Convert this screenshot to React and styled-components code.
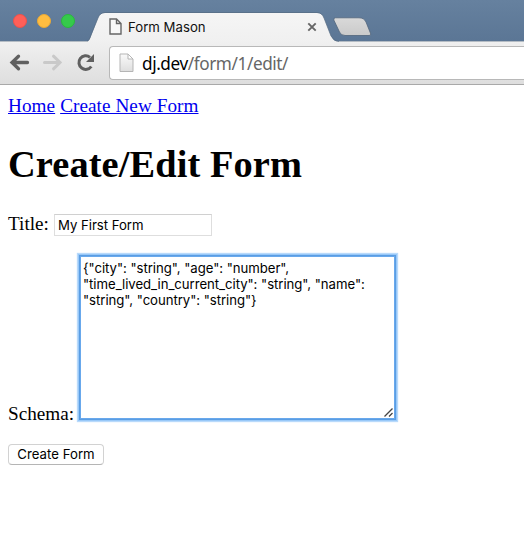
import React from "react";
import styled, { createGlobalStyle } from "styled-components";

const GlobalStyle = createGlobalStyle`
  *, *::before, *::after { box-sizing: border-box; }
  html, body { margin: 0; padding: 0; background: #fff; overflow: hidden; }
`;

const Window = styled.div`
  width: 524px;
  height: 544px;
  overflow: hidden;
  background: #fff;
`;

const TabStrip = styled.header`
  display: flex;
  height: 42px;
  background: linear-gradient(#66819f, #5b7695);
  border-bottom: 1px solid #b4bcc4;
`;

const TrafficLights = styled.div`
  display: flex;
  gap: 10px;
  padding: 14px 0 0 13px;
  width: 87px;
`;

const Light = styled.span`
  width: 14px;
  height: 14px;
  border-radius: 50%;
  background: ${(p) => p.$color};
  border: 1px solid ${(p) => p.$edge};
`;

const Tab = styled.div`
  position: relative;
  display: flex;
  width: 252px;
  height: 42px;
  padding: 0 22px 0 22px;
  flex: none;
`;

const TabShape = styled.svg`
  position: absolute;
  left: 0;
  top: 0;
`;

const TabIcon = styled.svg`
  position: relative;
  flex: none;
  margin-top: 18px;
`;

const TabTitle = styled.span`
  position: relative;
  flex: 1;
  margin: 19px 0 0 6px;
  font: 13.2px/17px Inter, "Liberation Sans", sans-serif;
  color: #111;
  white-space: nowrap;
`;

const CloseIcon = styled.svg`
  position: relative;
  margin-top: 22px;
`;

const NewTab = styled.svg`
  flex: none;
  margin: 17px 0 0 -6px;
`;

const Toolbar = styled.nav`
  display: flex;
  height: 43px;
  background: linear-gradient(#f0f0f0, #dedede);
  border-bottom: 1px solid #a9a9a9;
`;

const NavIcons = styled.div`
  display: flex;
  width: 109px;
  padding: 10px 0 0 9px;
  gap: 12px;
`;

const AddressBar = styled.div`
  display: flex;
  flex: 1;
  height: 34px;
  margin-top: 4px;
  padding-left: 9px;
  background: #fff;
  border: 1px solid #b8b8b8;
  border-right: 0;
  border-radius: 4px 0 0 4px;
`;

const PageIcon = styled.svg`
  flex: none;
  margin-top: 6px;
`;

const Url = styled.span`
  margin: 5px 0 0 8px;
  font: 17.2px/24px "Noto Sans", "Open Sans", sans-serif;
  letter-spacing: -0.42px;
  color: #666;
  white-space: nowrap;
`;

const Host = styled.span`
  color: #000;
`;

const Page = styled.main`
  padding: 10px 8px 0;
  font: 19.2px/22px "Liberation Serif", "Times New Roman", serif;
  color: #000;
`;

const Links = styled.div`
  display: flex;
  gap: 5px;
  height: 22px;
`;

const PageLink = styled.a`
  color: #0000ee;
  text-decoration: underline;
  letter-spacing: 0.06px;
`;

const Heading = styled.h1`
  margin: 25px 0 0;
  height: 44px;
  font-size: 38.4px;
  line-height: 44px;
  font-weight: bold;
  letter-spacing: 0.1px;
  white-space: nowrap;
`;

const Field = styled.div`
  display: flex;
  align-items: flex-end;
  margin-top: ${(p) => p.$gap};
`;

const Label = styled.label`
  width: ${(p) => p.$width};
  flex: none;
  margin-bottom: ${(p) => p.$drop};
`;

const TextInput = styled.input`
  width: 158px;
  height: 22px;
  padding: 1px 3px;
  border: 1px solid #dedede;
  border-top-color: #d0d0d0;
  border-radius: 0;
  outline: 0;
  background: #fff;
  color: #000;
  font: 13.2px/16px Inter, "Liberation Sans", sans-serif;
  letter-spacing: -0.04px;
`;

const AreaWrap = styled.div`
  position: relative;
  display: flex;
`;

const TextArea = styled.textarea`
  width: 315px;
  height: 163px;
  padding: 3px 2px 3px;
  border: 1px solid #68a8ec;
  box-shadow: 0 0 0 1px #5a9de3, 0 0 0 2px #98c8f8, 0 0 1px 3px #b9dafb;
  border-radius: 0;
  outline: 0;
  resize: none;
  overflow: hidden;
  color: #000;
  background: #fff;
  font: 13.2px/16px Inter, "Liberation Sans", sans-serif;
  letter-spacing: -0.05px;
  white-space: pre;
`;

const Grip = styled.svg`
  position: absolute;
  right: 2px;
  bottom: 2px;
`;

const SubmitButton = styled.button`
  display: block;
  width: 96px;
  height: 21px;
  margin-top: 25px;
  padding: 0;
  border: 1px solid #d2d2d2;
  border-bottom-color: #b5b5b5;
  border-radius: 4px;
  background: #fff;
  color: #000;
  font: 13.2px/19px Inter, "Liberation Sans", sans-serif;
  letter-spacing: 0.02px;
  white-space: nowrap;
`;

const schema =
  '{"city": "string", "age": "number",\n"time_lived_in_current_city": "string", "name":\n"string", "country": "string"}';

export default function App() {
  return (
    <Window>
      <GlobalStyle />
      <TabStrip>
        <TrafficLights>
          <Light $color="#ff5f58" $edge="#ed514b" />
          <Light $color="#ffbd40" $edge="#e9a936" />
          <Light $color="#35ca4b" $edge="#2bb83e" />
        </TrafficLights>
        <Tab>
          <TabShape width="252" height="42" viewBox="0 0 252 42">
            <defs>
              <linearGradient id="tabFill" x1="0" y1="0" x2="0" y2="1">
                <stop offset="0" stopColor="#f5f5f5" />
                <stop offset="1" stopColor="#f0f0f0" />
              </linearGradient>
            </defs>
            <path d="M0 42C2 41 3 39 4 36L11 18Q13 13 18 13H230Q235 13 237 18L244 36Q247 42 252 42Z" fill="url(#tabFill)" />
            <path d="M-1 41.5C2 41 3 38 4 35L11 18Q13 12.5 18 12.5H230Q235 12.5 237 18L244 36Q247 41.5 252 41.5" fill="none" stroke="#566b82" strokeWidth=".7" />
          </TabShape>
          <TabIcon width="13" height="17" viewBox="0 0 13 17">
            <path d="M1 1H7.5L12 5.5V16H1ZM7.5 1V5.5H12" fill="#f8f8f8" stroke="#666" strokeWidth="1.4" />
          </TabIcon>
          <TabTitle>Form Mason</TabTitle>
          <CloseIcon width="10" height="10" viewBox="0 0 10 10">
            <path d="M1.3 1.3L8.7 8.7M8.7 1.3L1.3 8.7" stroke="#666" strokeWidth="1.9" />
          </CloseIcon>
        </Tab>
        <NewTab width="39" height="20" viewBox="0 0 39 20">
          <defs>
            <linearGradient id="newTabFill" x1="0" y1="0" x2="0" y2="1">
              <stop offset="0" stopColor="#d9d9d9" />
              <stop offset="1" stopColor="#cacaca" />
            </linearGradient>
          </defs>
          <path d="M2.500 .8H26Q31 .8 33 5L37.800 17Q38 18.500 36 18.500H12Q8 18.500 6.500 15L.8 3Q.5 .8 2.500 .8Z" fill="url(#newTabFill)" stroke="#50657b" strokeWidth=".8" />
        </NewTab>
      </TabStrip>
      <Toolbar>
        <NavIcons>
          <svg width="21" height="22" viewBox="0 0 21 22">
            <path d="M18.500 10.500H4M9.500 4.200L3 10.500L9.500 16.800" fill="none" stroke="#606060" strokeWidth="3.300" strokeLinecap="round" />
          </svg>
          <svg width="21" height="22" viewBox="0 0 21 22">
            <path d="M2.500 10.500H17M11.500 4.200L18 10.500L11.500 16.800" fill="none" stroke="#c9c9c9" strokeWidth="3" strokeLinecap="round" />
          </svg>
          <svg width="22" height="22" viewBox="0 0 22 22">
            <path d="M16.300 14.500A6.800 6.800 0 1 1 15 5.300" fill="none" stroke="#606060" strokeWidth="3" />
            <path d="M19 2V10H11Z" fill="#606060" />
          </svg>
        </NavIcons>
        <AddressBar>
          <PageIcon width="15" height="20" viewBox="0 0 15 20">
            <defs>
              <linearGradient id="pageFill" x1="0" y1="0" x2="0" y2="1">
                <stop offset="0" stopColor="#fafafa" />
                <stop offset="1" stopColor="#dedede" />
              </linearGradient>
            </defs>
            <path d="M1 1H9L14 6V18.500H1ZM9 1V6H14" fill="url(#pageFill)" stroke="#b5b5b5" />
          </PageIcon>
          <Url>
            <Host>dj.dev</Host>/form/1/edit/
          </Url>
        </AddressBar>
      </Toolbar>
      <Page>
        <Links>
          <PageLink href="#home">Home</PageLink>
          <PageLink href="#new">Create New Form</PageLink>
        </Links>
        <Heading>Create/Edit Form</Heading>
        <Field $gap="27px">
          <Label $width="46px" $drop="1px">Title:</Label>
          <TextInput defaultValue="My First Form" />
        </Field>
        <Field $gap="20px">
          <Label $width="72px" $drop="-6px">Schema:</Label>
          <AreaWrap>
            <TextArea defaultValue={schema} />
            <Grip width="9" height="9" viewBox="0 0 9 9">
              <path d="M.5 8.500L8.500 .5M5 8.500L8.500 5" stroke="#444" strokeWidth="1.3" />
            </Grip>
          </AreaWrap>
        </Field>
        <SubmitButton>Create Form</SubmitButton>
      </Page>
    </Window>
  );
}
